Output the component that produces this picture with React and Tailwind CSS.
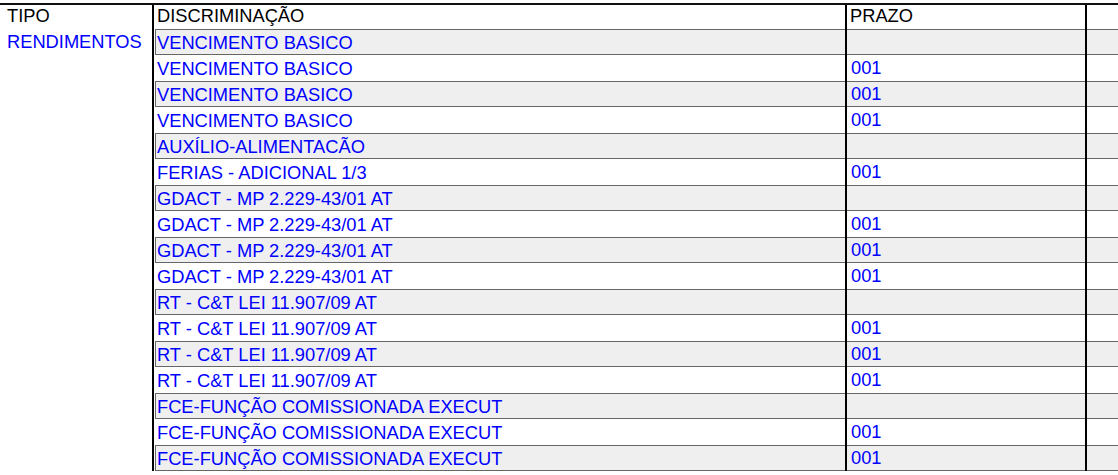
const rows = [
  ["VENCIMENTO BASICO", ""],
  ["VENCIMENTO BASICO", "001"],
  ["VENCIMENTO BASICO", "001"],
  ["VENCIMENTO BASICO", "001"],
  ["AUXÍLIO-ALIMENTACÃO", ""],
  ["FERIAS - ADICIONAL 1/3", "001"],
  ["GDACT - MP 2.229-43/01 AT", ""],
  ["GDACT - MP 2.229-43/01 AT", "001"],
  ["GDACT - MP 2.229-43/01 AT", "001"],
  ["GDACT - MP 2.229-43/01 AT", "001"],
  ["RT - C&T LEI 11.907/09 AT", ""],
  ["RT - C&T LEI 11.907/09 AT", "001"],
  ["RT - C&T LEI 11.907/09 AT", "001"],
  ["RT - C&T LEI 11.907/09 AT", "001"],
  ["FCE-FUNÇÃO COMISSIONADA EXECUT", ""],
  ["FCE-FUNÇÃO COMISSIONADA EXECUT", "001"],
  ["FCE-FUNÇÃO COMISSIONADA EXECUT", "001"],
];

function Cell({ grey, children, pad }) {
  return (
    <div className="h-[26px] border-l-2 border-black">
      <div
        className={
          "h-full leading-[25px] whitespace-nowrap overflow-hidden border-y " +
          pad +
          (grey ? " bg-[#efefef] border-[#666]" : " border-transparent")
        }
      >
        {children}
      </div>
    </div>
  );
}

export default function App() {
  return (
    <div
      className="w-[1118px] h-[475px] overflow-hidden bg-white text-[18.3px] pt-[3px]"
      style={{ fontFamily: '"Liberation Sans", Arial, sans-serif' }}
    >
      <div className="border-t-2 border-[#111] grid grid-cols-[152px_693px_240px_1fr]">
        <div className="h-[24px] pl-[7px] leading-[22px] text-black">TIPO</div>
        <div className="h-[24px] border-l-2 border-black pl-[3px] leading-[22px] text-black">DISCRIMINAÇÃO</div>
        <div className="h-[24px] border-l-2 border-black pl-[3px] leading-[22px] text-black">PRAZO</div>
        <div className="h-[24px] border-l-2 border-black"></div>

        {rows.map(([desc, prazo], i) => {
          const grey = i % 2 === 0;
          return [
            <div key={"t" + i} className="h-[26px] pl-[7px] leading-[26px] text-[#0000ff]">
              {i === 0 ? "RENDIMENTOS" : ""}
            </div>,
            <Cell
              key={"d" + i}
              grey={grey}
              pad={"ml-px pl-px text-[#0000ff] border-l " + (grey ? "border-l-[#666]" : "border-l-transparent")}
            >
              {desc}
            </Cell>,
            <Cell key={"p" + i} grey={grey} pad="pl-[4px] text-[#0000ff]">
              <span className="relative top-[-1px]">{prazo}</span>
            </Cell>,
            <Cell key={"x" + i} grey={grey} pad="">
              {""}
            </Cell>,
          ];
        })}
      </div>
    </div>
  );
}
